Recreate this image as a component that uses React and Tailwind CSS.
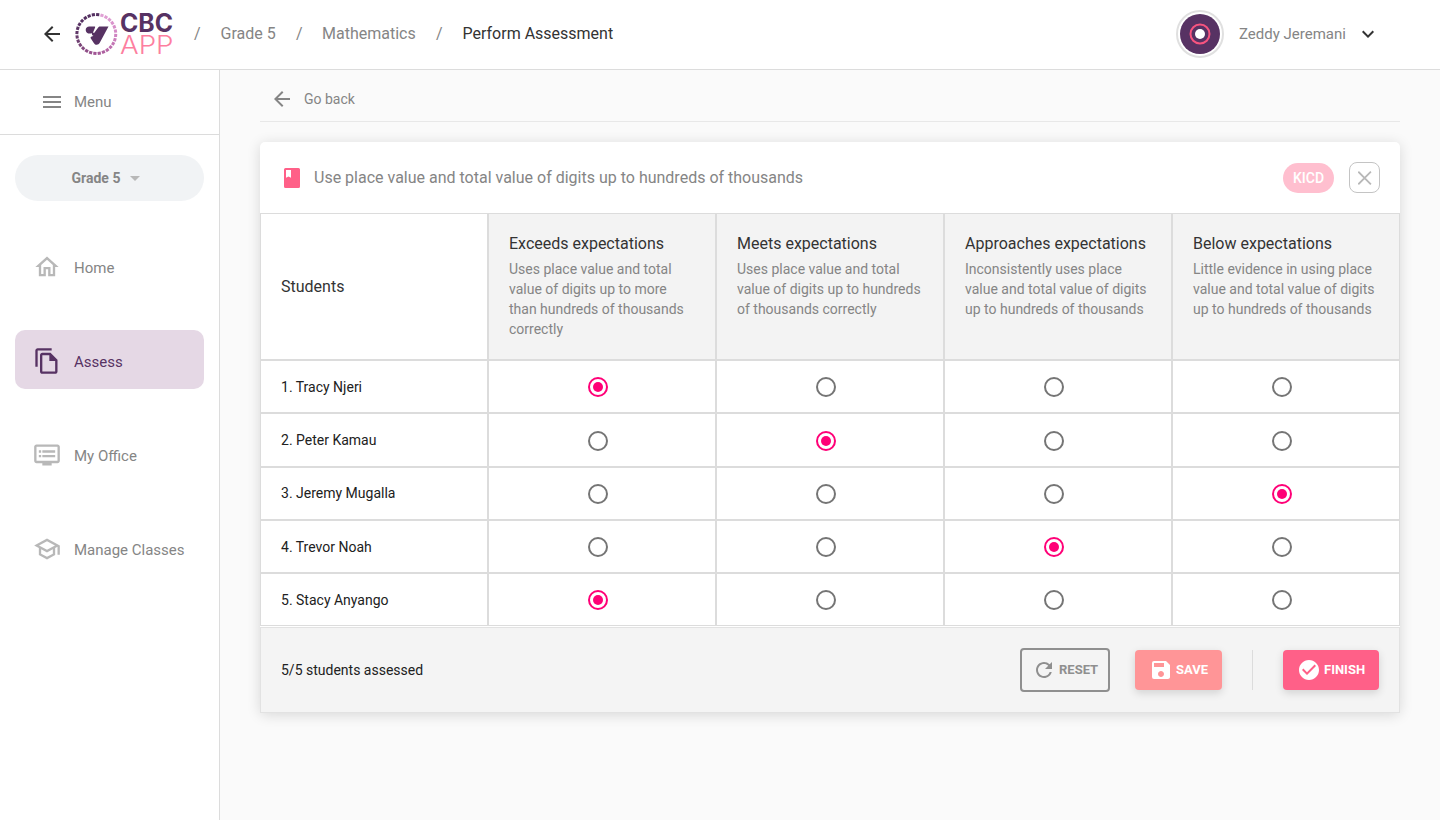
import { Fragment } from "react";
import {
  MdArrowBack, MdKeyboardArrowDown, MdMenu, MdArrowDropDown, MdOutlineHome, MdOutlineFileCopy,
  MdOutlineDvr, MdOutlineSchool, MdRefresh, MdSave, MdCheckCircle,
} from "react-icons/md";

const RING = ["#e0a0d4", "#df9dd2", "#dd99d0", "#da94cc", "#d78fc9", "#d48ac5", "#cf84c1", "#ca7dbb", "#c476b5", "#bd6eae", "#b566a6", "#ad5f9f", "#a65a99", "#a05694", "#99538f", "#8f4e87", "#854a80", "#7a4578", "#704072", "#673c6c", "#603868", "#5b3565", "#573263", "#553162", "#543061", "#543061", "#543061", "#543061"];

function Logo() {
  return (
    <svg className="h-[58px] w-[102px] shrink-0" viewBox="0 -5 102 58">
      {RING.map((c, i) => (
        <rect key={i} x="20.7" y="3.1" width="3.2" height="3" fill={c} transform={`rotate(${i * (360 / 28) + 17} 22.3 24)`} />
      ))}
      <path d="M15.300 16.500H20.400C21.200 16.500 21.300 17 21 17.700L19.300 21.800C18.900 23 19.800 23.400 20.500 22.400L24 17.700C24.600 16.900 25.200 16.500 26.200 16.500H34.500L25.900 32.600C24.300 35.500 21.300 35.400 19.800 32.900L16.700 28.300C16.100 27 17.300 26.800 18.500 26.300L19.500 25.700C18.200 25.500 17.800 24.700 18 23.300C14.500 24.300 11.700 22.600 11.700 19.900C11.700 17.900 13.200 16.500 15.300 16.500Z" fill="#573263" />
      <text x="46" y="22" textLength="53" lengthAdjust="spacingAndGlyphs" fontSize="25" fontWeight="700" fontFamily="Inter, sans-serif" fill="#573263">CBC</text>
      <text x="46" y="44.300" textLength="53.500" lengthAdjust="spacingAndGlyphs" fontSize="25" fontWeight="300" fontFamily="Inter, sans-serif" fill="#fd7f9f">APP</text>
    </svg>
  );
}

function BookIcon() {
  return (
    <svg className="size-6 shrink-0" viewBox="0 0 24 24" fill="#ff6088">
      <path fillRule="evenodd" d="M5.500 2h13A1.500 1.500 0 0 1 20 3.500v17a1.500 1.500 0 0 1-1.500 1.500h-13A1.500 1.500 0 0 1 4 20.500v-17A1.500 1.500 0 0 1 5.500 2zM6 4v7.800l2.500-1.300 2.500 1.300V4z" />
    </svg>
  );
}

const NAV = [
  { label: "Home", Icon: MdOutlineHome },
  { label: "Assess", Icon: MdOutlineFileCopy, active: true },
  { label: "My Office", Icon: MdOutlineDvr },
  { label: "Manage Classes", Icon: MdOutlineSchool },
];

const LEVELS = [
  { title: "Exceeds expectations", text: "Uses place value and total value of digits up to more than hundreds of thousands correctly" },
  { title: "Meets expectations", text: "Uses place value and total value of digits up to hundreds of thousands correctly" },
  { title: "Approaches expectations", text: "Inconsistently uses place value and total value of digits up to hundreds of thousands" },
  { title: "Below expectations", text: "Little evidence in using place value and total value of digits up to hundreds of thousands" },
];

const STUDENTS = [
  { name: "Tracy Njeri", level: 0 },
  { name: "Peter Kamau", level: 1 },
  { name: "Jeremy Mugalla", level: 3 },
  { name: "Trevor Noah", level: 2 },
  { name: "Stacy Anyango", level: 0 },
];

function Radio({ on }) {
  return (
    <span className={`flex size-5 items-center justify-center rounded-full border-2 ${on ? "border-[#ff0077]" : "border-[#757575]"}`}>
      {on && <span className="size-2.5 rounded-full bg-[#ff0077]" />}
    </span>
  );
}

export default function App() {
  return (
    <div className="flex h-[820px] w-[1440px] flex-col overflow-hidden bg-[#fafafa] font-['Roboto',sans-serif] text-[#858585]">
      <header className="flex h-[70px] shrink-0 items-center border-b border-[#dcdcdc] bg-white pb-px pl-10 pr-[60px] text-base">
        <MdArrowBack className="size-6 shrink-0 text-[#333]" />
        <div className="ml-2.5 flex w-[120px]"><Logo /></div>
        <nav className="flex items-center pb-px whitespace-nowrap">
          <span className="w-[26.500px]">/</span>
          <span className="w-[75.500px]">Grade 5</span>
          <span className="w-[26px]">/</span>
          <span className="w-[114px]">Mathematics</span>
          <span className="w-[26.500px]">/</span>
          <span className="text-[#333]">Perform Assessment</span>
        </nav>
        <div className="ml-auto flex items-center">
          <div className="flex size-12 items-center justify-center rounded-full border-2 border-[#e0e0e0] bg-white">
            <svg className="size-10" viewBox="0 0 40 40">
              <circle cx="20" cy="20" r="20" fill="#573263" />
              <circle cx="20" cy="20" r="9.500" fill="none" stroke="#f7547f" strokeWidth="2" />
              <circle cx="20" cy="20" r="5" fill="#fff" />
            </svg>
          </div>
          <span className="ml-[15px] w-[117px] text-[15px]">Zeddy Jeremani</span>
          <MdKeyboardArrowDown className="size-6 text-[#333]" />
        </div>
      </header>
      <div className="flex min-h-0 grow">
        <aside className="w-[220px] shrink-0 border-r border-[#dcdcdc] bg-white">
          <div className="flex h-[65px] items-center border-b border-[#dcdcdc] pl-10 text-[15px]">
            <MdMenu className="mr-2.5 size-6" />Menu
          </div>
          <div className="mx-[15px] mt-5 flex h-[46px] items-center justify-center rounded-full bg-[#f1f3f5] text-sm font-bold">
            <span className="mr-[3px]">Grade 5</span>
            <MdArrowDropDown className="size-6 text-[#b8b8b8]" />
          </div>
          <nav className="mx-[15px] mt-[35px] flex flex-col gap-[35px]">
            {NAV.map(({ label, Icon, active }) => (
              <div key={label} className={`flex h-[59px] items-center rounded-[10px] pl-[18px] pt-[3px] text-[15px] ${active ? "bg-[#e5d8e5] text-[#573263]" : ""}`}>
                <Icon className={`mr-[13px] size-7 ${active ? "" : "text-[#b8b8b8]"}`} />
                <span className="pt-[3px]">{label}</span>
              </div>
            ))}
          </nav>
        </aside>
        <main className="grow px-10">
          <div className="flex h-[52px] items-center border-b border-[#e8e8e8] pl-2.5 pt-1.5 text-sm">
            <MdArrowBack className="mr-2.5 size-6" />Go back
          </div>
          <section className="mt-5 rounded-[5px] bg-white shadow-[0_2px_14px_rgba(0,0,0,0.14)]">
            <div className="flex h-[71px] items-center px-5">
              <BookIcon />
              <h1 className="ml-2.5 grow text-base">Use place value and total value of digits up to hundreds of thousands</h1>
              <span className="mr-[15px] flex h-[30px] w-[51px] items-center justify-center rounded-full bg-[#ffbfcf] text-sm font-medium text-white">KICD</span>
              <span className="flex size-[31px] items-center justify-center rounded-lg border border-[#c4c4c4]">
                <svg className="size-[14px]" viewBox="0 0 14 14" fill="none" stroke="#b8b8b8" strokeWidth="1.8">
                  <path d="M0.300 0.700l12.600 12.600M12.900 0.700l-12.600 12.600" />
                </svg>
              </span>
            </div>
            <div className="grid grid-cols-5 grid-rows-[147.200px_repeat(5,53.200px)]">
              <div className="flex items-center border border-[#dcdcdc] pl-5 text-base text-[#333]">Students</div>
              {LEVELS.map((l) => (
                <div key={l.title} className="border border-[#dcdcdc] bg-[#f3f3f3] px-5 pt-5">
                  <h2 className="text-base leading-5 text-[#333]">{l.title}</h2>
                  <p className="mt-[5px] text-sm leading-5">{l.text}</p>
                </div>
              ))}
              {STUDENTS.map((s, i) => (
                <Fragment key={s.name}>
                  <div className="flex items-center border border-[#dcdcdc] pl-5 pt-[0.4px] text-sm text-[#212121]">{i + 1}. {s.name}</div>
                  {LEVELS.map((l, k) => (
                    <div key={l.title} className="flex items-center justify-center border border-[#dcdcdc] pr-2 pt-[1.2px]">
                      <Radio on={s.level === k} />
                    </div>
                  ))}
                </Fragment>
              ))}
            </div>
            <footer className="mt-px flex h-[86px] items-center border border-[#e2e2e2] bg-[#f4f4f4] px-5 text-sm text-[#212121]">
              <span className="grow">5/5 students assessed</span>
              <button className="flex h-11 w-[90px] items-center rounded-[4px] border-2 border-[#8f8f8f] pl-2.5 text-[13px] font-bold text-[#8f8f8f]">
                <MdRefresh className="mr-[3px] size-6" />RESET
              </button>
              <button className="ml-[25px] flex h-10 w-[87px] items-center rounded-[4px] bg-[#ff9597] pl-3.5 text-[13px] font-bold text-white shadow-[0_3px_8px_rgba(0,0,0,0.14)]">
                <MdSave className="mr-[3px] size-6" />SAVE
              </button>
              <span className="mx-[30px] h-10 w-px bg-[#dcdcdc]" />
              <button className="flex h-10 w-24 items-center rounded-[4px] bg-[#ff6088] pl-3.5 text-[13px] font-bold text-white shadow-[0_3px_8px_rgba(0,0,0,0.14)]">
                <MdCheckCircle className="mr-[3px] size-6" />FINISH
              </button>
            </footer>
          </section>
        </main>
      </div>
    </div>
  );
}
